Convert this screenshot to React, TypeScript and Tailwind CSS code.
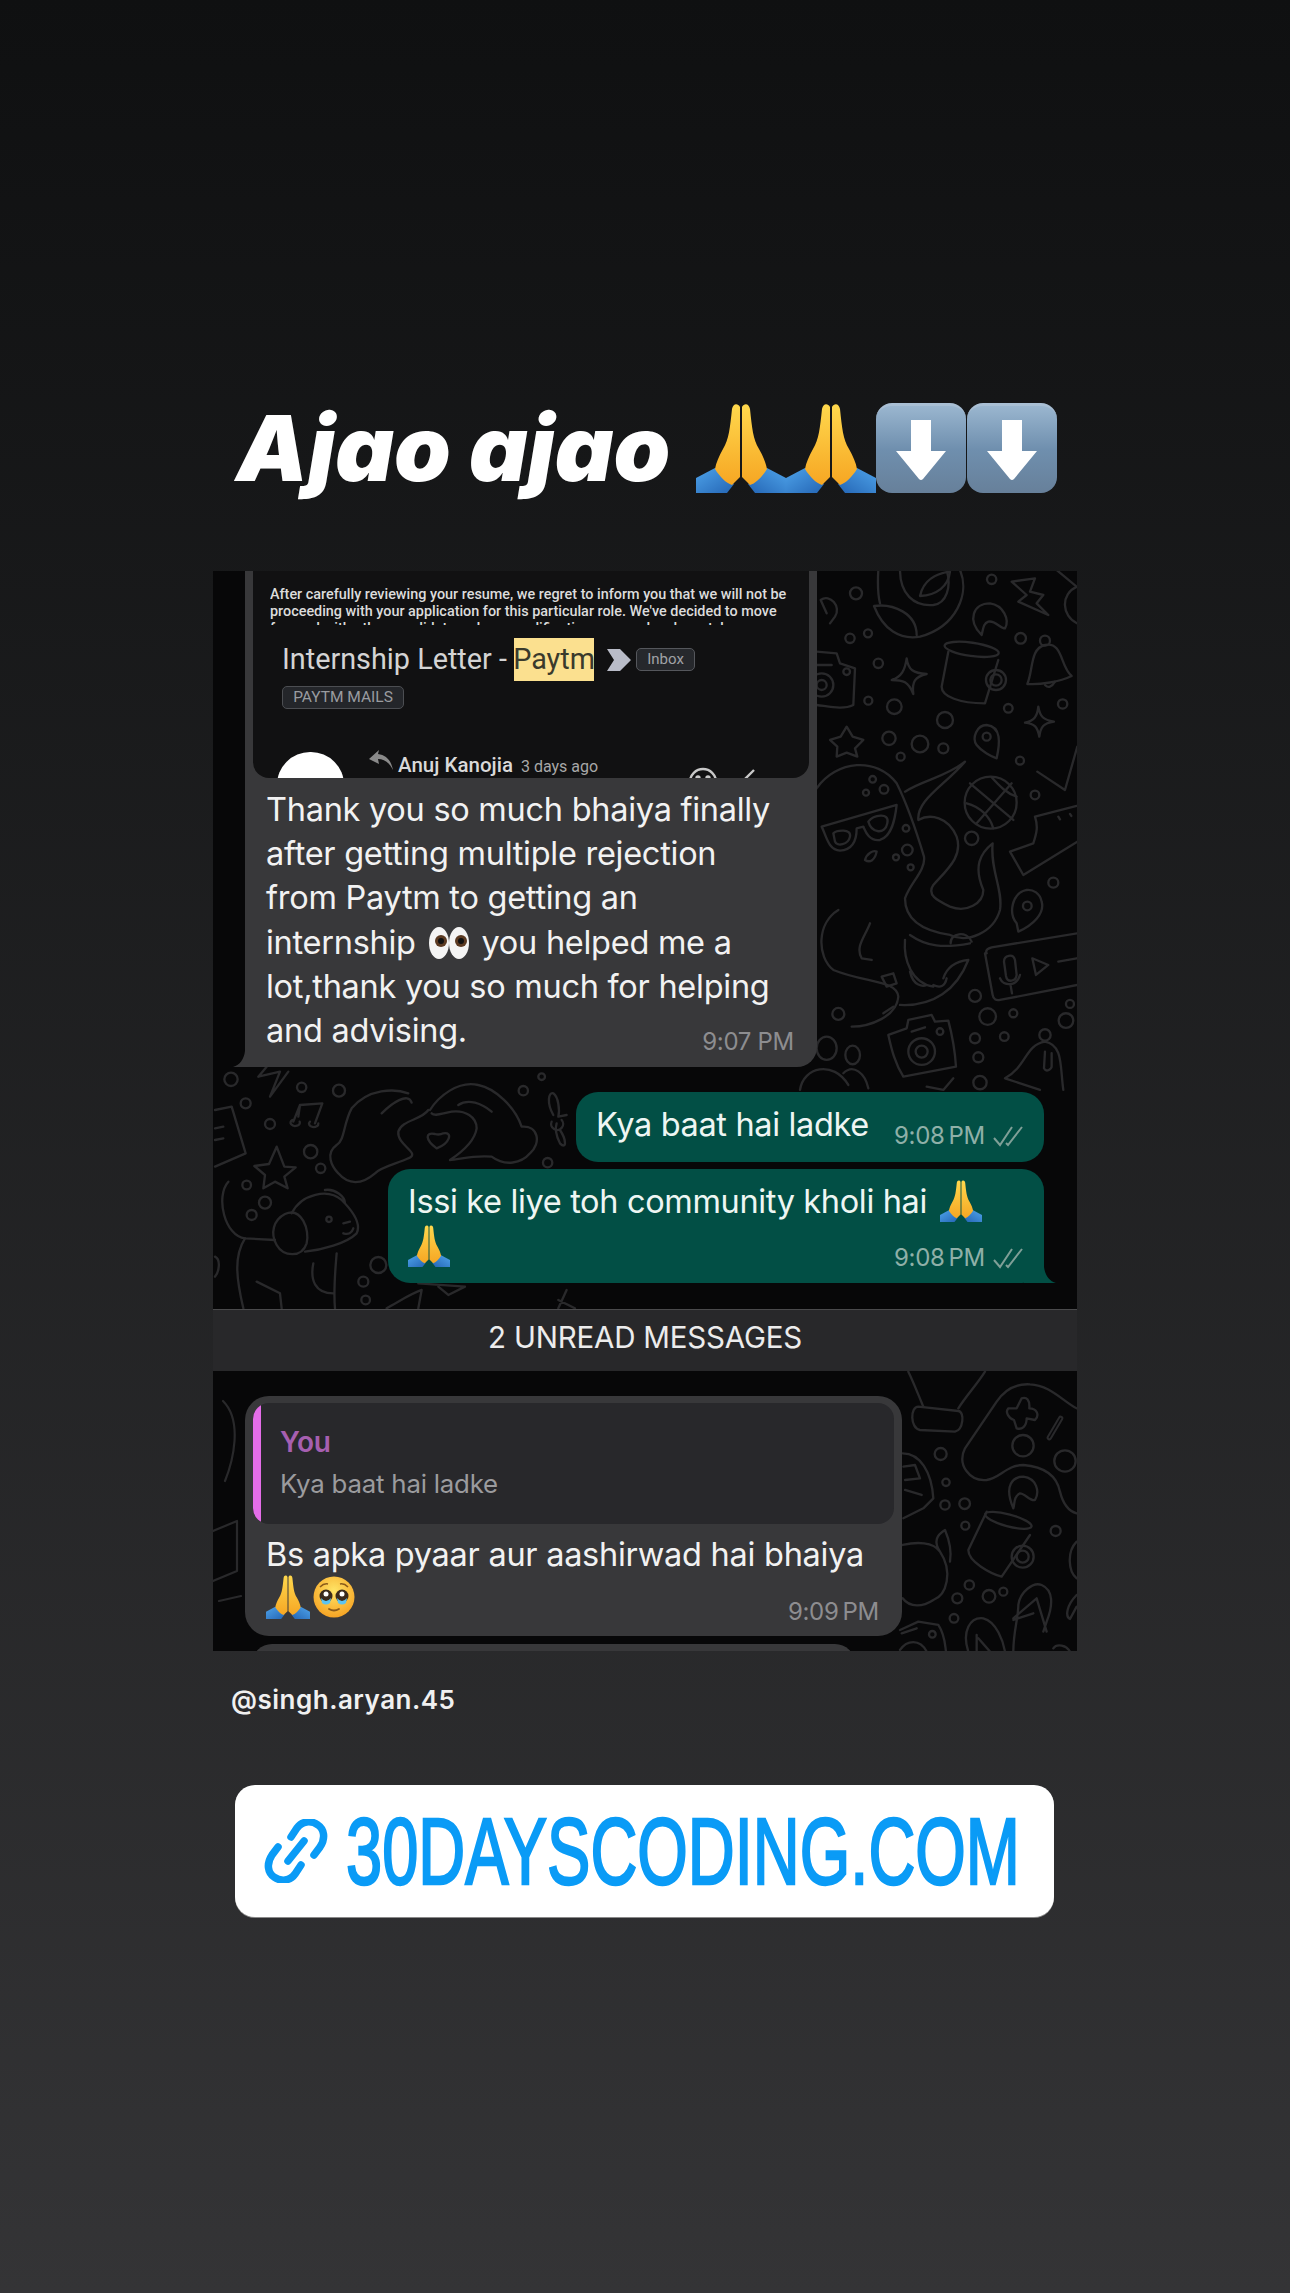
const sans = "font-['Inter','Liberation_Sans',sans-serif]";
const roboto = "font-['Roboto','Liberation_Sans',sans-serif]";

// Emoji are drawn because no colour emoji font is available
function PrayEmoji({ size = 90 }: { size?: number }) {
    return (
        <svg width={size} height={size} viewBox="0 0 90 90" className="shrink-0">
            <defs>
                <linearGradient id="hand" x1="0" y1="0" x2="0" y2="1">
                    <stop offset="0" stopColor="#ffd84d" />
                    <stop offset="1" stopColor="#f6a623" />
                </linearGradient>
                <linearGradient id="sleeve" x1="0" y1="0" x2="1" y2="1">
                    <stop offset="0" stopColor="#4ea3ea" />
                    <stop offset="1" stopColor="#2465b4" />
                </linearGradient>
            </defs>
            <g>
                <path d="M0 75 L19 65 L38 81 L31 90 L0 90Z" fill="url(#sleeve)" />
                <path d="M44 4 C42 0 37 0 36 6 C34 25 33 36 27 46 C23 53 20 60 19 66 C24 74 30 80 36 82 L44 74Z" fill="url(#hand)" />
            </g>
            <g transform="translate(90 0) scale(-1 1)">
                <path d="M0 75 L19 65 L38 81 L31 90 L0 90Z" fill="url(#sleeve)" />
                <path d="M44 4 C42 0 37 0 36 6 C34 25 33 36 27 46 C23 53 20 60 19 66 C24 74 30 80 36 82 L44 74Z" fill="url(#hand)" />
            </g>
        </svg>
    );
}

function ArrowEmoji() {
    return (
        <div className="flex h-[90px] w-[90px] shrink-0 items-center justify-center rounded-[16px] border-t-[3px] border-[#a9bfd4] bg-gradient-to-b from-[#9ab6cf] via-[#6f8fae] to-[#67809a]">
            <svg width="50" height="60" viewBox="0 0 50 60">
                <path d="M15 0 H35 V31 H50 L27 59 Q25 61 23 59 L0 31 H15Z" fill="#fff" />
            </svg>
        </div>
    );
}

function EyesEmoji() {
    return (
        <svg width="42" height="34" viewBox="0 0 42 34" className="mx-[3px] inline-block align-[-6px]">
            <ellipse cx="11" cy="17" rx="10" ry="16" fill="#f4f4f4" />
            <ellipse cx="31" cy="17" rx="10" ry="16" fill="#f4f4f4" />
            <circle cx="13" cy="15" r="6" fill="#5b3a22" />
            <circle cx="33" cy="15" r="6" fill="#5b3a22" />
            <circle cx="13" cy="15" r="3" fill="#111" />
            <circle cx="33" cy="15" r="3" fill="#111" />
        </svg>
    );
}

function PleadingEmoji() {
    return (
        <svg width="42" height="42" viewBox="0 0 42 42" className="shrink-0">
            <defs>
                <radialGradient id="face" cx="0.5" cy="0.35" r="0.7">
                    <stop offset="0" stopColor="#ffe566" />
                    <stop offset="1" stopColor="#f59e1f" />
                </radialGradient>
            </defs>
            <circle cx="21" cy="21" r="20.5" fill="url(#face)" />
            <circle cx="13" cy="20" r="6.5" fill="#3a2a1c" />
            <circle cx="29" cy="20" r="6.5" fill="#3a2a1c" />
            <circle cx="13" cy="18" r="2.5" fill="#fff" />
            <circle cx="29" cy="18" r="2.5" fill="#fff" />
            <path d="M8 22 Q13 28 18 22 L17 27 Q13 30 9 27Z" fill="#5cc4f2" />
            <path d="M24 22 Q29 28 34 22 L33 27 Q29 30 25 27Z" fill="#5cc4f2" />
            <path d="M7 11 Q11 7 15 8 M35 11 Q31 7 27 8" stroke="#8a5a1a" strokeWidth="1.6" fill="none" />
            <path d="M16 33 Q21 36 26 33" stroke="#8a5a1a" strokeWidth="1.8" fill="none" strokeLinecap="round" />
        </svg>
    );
}

function Ticks() {
    return (
        <svg width="32" height="24" viewBox="0 0 32 24" fill="none" stroke="#7f9f97" strokeWidth="2">
            <path d="M2 14 L8 21 L20 3" />
            <path d="M14 19 L16 21 L30 3" />
        </svg>
    );
}

function LinkGlyph() {
    return (
        <svg width="64" height="64" viewBox="0 0 64 64" fill="none" stroke="#0a9bf6" strokeWidth="7.5" strokeLinecap="round" className="ml-[29px] shrink-0">
            <path d="M50 36 L56 28 C62 19 60 10 54 6 C47 1 38 2 33 9 L27 18" />
            <path d="M14 28 L8 36 C2 45 4 54 10 58 C17 63 26 62 31 55 L37 46" />
            <path d="M24 42 L40 22" />
        </svg>
    );
}

function Circles({ items }: { items: number[][] }) {
    return (
        <>
            {items.map(([cx, cy, r]) => (
                <circle key={`${cx}-${cy}`} cx={cx} cy={cy} r={r} />
            ))}
        </>
    );
}

// Wallpaper of the upper chat, drawn in the 3x coordinates of the right column
function UpperDoodles() {
    return (
        <svg className="absolute inset-0" width="864" height="738" viewBox="0 0 864 738" fill="none" stroke="#29292b" strokeWidth="2.2" strokeLinecap="round" strokeLinejoin="round">
            <g transform="translate(587 -1) scale(0.3333)" strokeWidth="7">
                <Circles items={[[168,70,18],[150,205,14],[204,190,12],[235,280,14],[205,392,12],[283,410,22],[435,450,24],[575,28,14],[662,205,16],[625,415,13],[788,402,14],[267,505,20],[360,522,25],[430,535,15],[302,560,12],[660,572,12],[705,675,13],[515,805,20],[760,938,15],[525,1278,18],[563,1340,25],[640,1330,12],[810,1302,12],[798,1352,22],[525,1405,15],[613,1400,13],[535,1462,15],[540,1538,20],[115,1332,18],[218,628,10],[252,658,13],[198,668,9],[318,775,10],[322,840,16],[288,862,9],[332,892,9]]} />
                <path d="M62 90 C90 70 125 110 105 140 L90 160 M62 90 L80 130" />
                <path d="M235 0 C232 50 235 80 240 100" />
                <path d="M300 0 C300 70 340 110 400 105 C440 100 455 50 440 0" />
                <path d="M360 78 C370 30 410 10 450 5 C445 50 410 75 360 78Z" />
                <path d="M480 0 C510 70 470 170 360 200 C300 210 250 180 222 108 C280 100 350 130 350 195" />
                <path d="M635 35 L705 25 L690 65 L730 75 L710 100 L745 135 L655 95 L680 75Z" />
                <path d="M832 50 C780 70 785 140 832 160 M770 0 L830 50" />
                <path d="M545 195 C500 150 520 100 570 100 C610 105 630 150 615 175 C600 175 585 150 565 155 C550 160 550 175 545 195Z" />
                <ellipse cx="515" cy="238" rx="82" ry="20" transform="rotate(8 515 238)" />
                <path d="M445 245 L425 350 C425 380 480 400 555 400 L595 270" />
                <circle cx="588" cy="330" r="30" />
                <circle cx="588" cy="330" r="17" />
                <path d="M735 225 C690 235 700 300 682 342 C720 345 780 335 815 318 C780 290 790 215 735 225Z" />
                <circle cx="735" cy="212" r="15" />
                <path d="M735 345 Q750 360 765 335" />
                <path d="M50 245 L110 250 L120 280 L165 295 L160 405 C130 420 90 410 50 405 M50 285 H95" />
                <circle cx="65" cy="345" r="35" />
                <circle cx="65" cy="345" r="15" />
                <circle cx="140" cy="305" r="10" />
                <path d="M320 265 C325 300 340 310 380 312 C345 320 335 335 340 372 C325 335 310 330 275 330 C305 320 315 300 320 265Z" />
                <path d="M715 410 C720 440 730 450 762 455 C730 460 722 470 718 500 C712 470 705 462 675 458 C702 452 712 440 715 410Z" />
                <path d="M140 470 L158 500 L190 510 L165 535 L172 560 L140 548 L110 560 L112 530 L90 510 L122 500Z" />
                <path d="M560 465 C530 465 515 505 530 525 C545 545 575 560 590 565 C600 520 605 470 560 465Z" />
                <circle cx="560" cy="500" r="12" />
                <path d="M712 605 L795 660 L832 530" />
                <circle cx="572" cy="698" r="78" />
                <path d="M510 640 L640 750 M635 640 L530 760 M500 700 C540 710 570 740 580 775 M575 622 C600 650 620 670 650 680" />
                <path d="M50 655 C110 570 230 560 290 640 C320 700 345 770 372 860 C378 900 330 940 315 985 C315 1040 350 1080 450 1095 C500 1120 580 1090 600 1020 C610 960 570 900 578 820 C540 850 520 890 550 960 C550 1000 500 1030 450 1010 C410 990 380 975 400 945 C440 900 490 860 470 800 C445 740 390 730 355 750 C350 690 430 650 495 575 C440 620 370 630 315 665" />
                <path d="M65 770 L290 705 C285 750 275 800 240 810 C205 815 195 780 190 770 L170 775 C170 810 160 840 120 842 C85 840 80 800 65 770Z" />
                <path d="M100 790 C110 780 155 775 150 800 C145 825 110 830 105 815Z M205 755 C220 735 270 725 262 760 C255 795 215 790 205 755Z" />
                <path d="M195 870 C200 850 220 840 230 845 C225 870 210 880 195 870Z" />
                <path d="M115 1020 C50 1060 50 1160 100 1200 C200 1240 290 1230 295 1280 C290 1340 210 1370 155 1370 M210 1060 C195 1100 165 1130 185 1165 L215 1170" />
                <path d="M315 1110 C310 1170 335 1240 400 1250 M330 1205 C340 1250 370 1250 380 1245 M400 1245 C420 1255 435 1250 440 1225 M300 1305 C400 1310 470 1260 505 1170 C460 1175 440 1195 430 1225" />
                <path d="M245 1220 L280 1210 L290 1240 L260 1250Z M250 1330 L280 1310" />
                <path d="M330 1095 C380 1130 430 1135 510 1120 M452 1120 C450 1090 500 1080 515 1115" />
                <path d="M560 1150 C555 1140 565 1135 575 1132 L832 1090 M555 1150 L578 1275 C580 1290 590 1292 600 1290 L832 1245" />
                <path d="M612 1175 C612 1155 640 1150 645 1170 L650 1215 C648 1235 622 1240 618 1218Z M600 1225 C610 1250 650 1250 660 1215 M632 1247 L636 1270" />
                <path d="M697 1165 L745 1185 L708 1215Z M775 1175 L830 1165" />
                <path d="M680 960 C635 970 625 1030 650 1060 L655 1085 C700 1065 735 1030 725 995 C720 970 700 958 680 960Z" />
                <circle cx="682" cy="1008" r="13" />
                <path d="M630 845 L670 915 L832 815 M705 740 L830 708 M705 740 C715 770 710 790 700 820 L630 845 M775 740 L780 748 M810 732 L814 738" />
                <path d="M265 1395 L320 1375 L325 1350 L395 1335 L405 1355 L445 1352 C455 1390 465 1440 468 1490 L310 1520 C285 1480 275 1440 265 1395Z" />
                <circle cx="365" cy="1445" r="40" />
                <circle cx="365" cy="1445" r="18" />
                <path d="M335 1385 L375 1372" />
                <circle cx="420" cy="1385" r="10" />
                <circle cx="735" cy="1395" r="17" />
                <path d="M735 1415 C675 1425 680 1490 615 1525 L720 1560 M735 1415 C790 1425 780 1490 790 1560" />
                <path d="M735 1445 L732 1495 C740 1510 755 1495 755 1490 L755 1450" />
                <ellipse cx="80" cy="1435" rx="30" ry="35" />
                <ellipse cx="158" cy="1455" rx="22" ry="28" />
                <path d="M0 1560 C10 1490 100 1470 145 1545 M130 1510 C160 1480 195 1510 205 1555" />
                <path d="M380 1550 L430 1560 L460 1525" />
            </g>
            {/* lower left block */}
            <g transform="translate(-8 489) scale(0.3333)" strokeWidth="7">
                <Circles items={[[78,58,20],[290,82,14],[122,130,15],[402,92,18],[195,192,15],[317,275,20],[347,325,14],[125,375,13],[180,428,18],[140,465,15],[520,615,24],[475,665,15],[482,720,13],[955,92,14],[1010,50,10],[1028,308,14]]} />
                <path d="M160 50 L185 20 M160 50 L225 35 L195 110 L250 35" />
                <path d="M30 150 L80 140 L122 280 L30 320 M30 205 L55 200 M30 240 L55 235" />
                <path d="M265 185 L285 135 L352 130 L330 190 M285 135 L280 170 M262 180 A14 10 0 1 0 284 185 M315 185 A14 10 0 1 0 340 190" />
                <path d="M215 260 L238 320 L272 322 L238 350 L248 385 L210 365 L175 385 L180 345 L148 318 L192 312Z" />
                <path d="M530 160 C560 130 610 95 620 128 M610 100 C570 85 490 85 440 145 C415 190 420 240 395 255 C360 280 380 320 400 340 C430 375 470 375 510 340 C530 320 580 310 610 295 C650 280 575 255 580 215 C590 180 650 180 670 150" />
                <path d="M675 150 C700 110 760 60 820 75 C870 85 930 140 950 200 C1000 195 1010 250 975 280 C950 310 900 320 860 290 C800 285 760 300 735 300 C780 270 810 240 815 205 C815 170 780 150 740 155 C710 160 690 170 680 160 M760 135 C790 115 830 130 860 155" />
                <path d="M695 265 C660 240 660 215 690 222 C700 225 705 225 715 220 C745 215 735 250 695 265Z" />
                <path d="M1045 165 C1025 130 1030 95 1045 100 C1060 110 1065 150 1060 170 L1085 165 M1065 210 C1085 240 1085 270 1065 250 C1055 230 1050 205 1055 190 M1040 185 A18 18 0 1 0 1070 180" />
                <path d="M70 365 C30 410 60 530 120 535 L210 540 M260 460 C290 400 370 385 410 420 C440 450 470 490 455 520 C425 550 350 570 300 575 M360 390 C390 385 420 410 420 430" />
                <path d="M240 462 C205 480 195 520 215 555 C235 590 290 595 305 550 C315 510 290 440 240 462Z" />
                <circle cx="372" cy="478" r="8" />
                <path d="M415 490 L435 485 M415 520 C430 525 440 520 445 505" />
                <path d="M120 535 C85 590 95 660 115 745 M395 580 C390 640 385 690 390 745 M155 665 L225 700 L230 745 M325 610 C315 660 330 700 385 700" />
                <path d="M545 745 C590 720 620 700 650 690 L640 745 M1060 720 L1110 745 M1085 690 L1060 745" />
                <path d="M640 670 L780 680 L730 705 L700 680" />
                <path d="M30 590 C50 600 40 640 30 650" />
            </g>
        </svg>
    );
}

function LowerDoodles() {
    return (
        <svg className="absolute inset-0" width="864" height="280" viewBox="0 0 864 280" fill="none" stroke="#29292b" strokeLinecap="round" strokeLinejoin="round">
            <g transform="translate(677 -6) scale(0.3333)" strokeWidth="7">
                <Circles items={[[152,267,18],[168,352,11],[165,420,14],[224,416,16],[226,482,12],[497,498,15],[525,288,32],[399,242,32],[238,660,14],[202,700,15],[297,694,19],[340,680,12],[192,760,13],[127,808,10]]} />
                <path d="M55 20 C70 50 85 90 100 125 M285 20 C260 60 230 90 205 130" />
                <path d="M85 125 L205 138 C225 140 220 195 195 200 L90 195 C60 190 60 125 85 125Z" />
                <path d="M560 130 C520 110 480 60 420 58 C370 55 340 80 320 110 L225 250 C200 300 240 350 290 345 C330 340 350 300 400 300 C460 305 500 330 510 380 C520 420 540 440 560 445" />
                <path d="M395 100 C410 95 420 105 418 130 C440 130 450 150 435 165 L410 160 C410 185 395 195 380 190 L372 165 C355 160 345 140 355 130 L380 130 Z" />
                <path d="M512 160 L478 218" strokeWidth="16" />
                <path d="M512 160 L478 218" strokeWidth="4" stroke="#08080a" />
                <path d="M370 430 C340 360 370 335 400 335 C440 340 450 380 435 405 C420 410 405 385 390 385 C370 395 375 415 370 430Z" />
                <ellipse cx="355" cy="466" rx="72" ry="18" transform="rotate(15 355 466)" />
                <path d="M290 440 L235 555 C235 590 300 625 335 635 L420 510" />
                <circle cx="398" cy="575" r="33" />
                <circle cx="398" cy="575" r="18" />
                <path d="M38 540 C80 530 130 530 150 560 C190 620 170 690 130 705 C100 725 60 730 38 700 M150 560 C130 530 140 510 165 495 C180 530 185 560 180 590" />
                <path d="M38 265 C90 265 125 320 130 400 L100 430 L40 460 M40 305 L75 300 L90 340 L45 345 M45 375 L95 390" />
                <path d="M30 795 L85 770 L145 780 C165 810 165 840 168 860 M35 805 L80 790 M30 855 C50 825 90 820 110 860" />
                <path d="M235 860 C215 800 240 755 280 760 C320 770 340 830 345 860 M260 860 L260 810 M265 820 L300 860" />
                <path d="M370 860 C370 800 385 760 385 720 C390 680 430 650 455 660 C490 675 490 720 470 770 L460 800 M370 760 L440 700 L470 800 M370 765 L430 745" />
                <path d="M490 850 C500 835 530 840 540 860 M560 690 C530 720 525 755 540 762 L560 725 M560 530 C530 560 535 620 560 640" />
            </g>
            <g strokeWidth="2.2">
                <path d="M10 30 C30 50 20 90 12 110 M0 160 L24 150 L24 200 L0 210 M6 230 L28 225" />
            </g>
        </svg>
    );
}

function Time({ label }: { label: string }) {
    return <span className={`${sans} text-[24px] leading-[28px] tracking-[-0.3px] text-[#8d8d90] whitespace-nowrap`}>{label}</span>;
}

function SentTime({ label }: { label: string }) {
    return (
        <div className="flex items-center gap-[7px]">
            <span className={`${sans} text-[24px] leading-[28px] tracking-[-0.3px] text-[#8fb0a8] whitespace-nowrap`}>{label}</span>
            <Ticks />
        </div>
    );
}

function MailPreview() {
    return (
        <div className="mx-[8px] h-[207px] overflow-hidden rounded-b-[16px] bg-[#111112] pl-[17px] pr-[20px]">
            {/* third line of the mail body is cut, only its ascenders show */}
            <div className="mt-[15px] h-[39px] overflow-hidden">
                <p className={`${roboto} text-[14.4px] leading-[17px] font-medium text-[#dcdcdc] whitespace-nowrap`}>
                    After carefully reviewing your resume, we regret to inform you that we will not be<br />
                    proceeding with your application for this particular role. We've decided to move<br />
                    forward with other candidates whose qualifications more closely match
                </p>
            </div>
            <div className={`${roboto} mt-[13px] flex h-[43px] items-center pl-[12px] text-[28.8px] text-[#d4d4d4]`}>
                <span className="whitespace-pre">Internship Letter - </span>
                <span className="flex h-[43px] w-[80px] items-center justify-center bg-[#fbe08f] text-[#3a3a2c]">Paytm</span>
                <svg width="24" height="22" viewBox="0 0 24 22" className="ml-[13px]">
                    <path d="M0 0 H13 L24 11 L13 22 H0 L7 11Z" fill="#b9bcc8" />
                </svg>
                <span className="ml-[5px] flex h-[23px] w-[59px] items-center justify-center rounded-[5px] border border-[#55575c] bg-[#26282c] text-[15px] text-[#a0a2a6]">Inbox</span>
            </div>
            <div className={`${roboto} ml-[12px] mt-[5px] flex h-[23px] w-[122px] items-center justify-center rounded-[5px] border border-[#4c4e52] bg-[#24262a] text-[15.5px] text-[#9a9ca0]`}>PAYTM MAILS</div>
            <div className="mt-[43px] flex items-start">
                <div className="ml-[7px] h-[66px] w-[67px] shrink-0 rounded-full bg-white" />
                <svg width="24" height="20" viewBox="0 0 24 20" className="ml-[25px] mt-[-2px] shrink-0">
                    <path d="M10 0 L0 9 L10 14 L9 9 C15 9 20 12 24 20 C22 10 17 5 9 4Z" fill="#8a8a8a" />
                </svg>
                <span className={`${roboto} ml-[5px] text-[20.5px] leading-[26px] font-medium text-[#d9d9d9] whitespace-nowrap`}>Anuj Kanojia</span>
                <span className={`${roboto} ml-[8px] mt-[3px] text-[16px] leading-[24px] text-[#a8a8a8] whitespace-nowrap`}>3 days ago</span>
                <svg width="30" height="30" viewBox="0 0 30 30" fill="none" stroke="#c8c8c8" strokeWidth="2.4" className="ml-[90px] mt-[15px] shrink-0">
                    <circle cx="15" cy="15" r="13" />
                    <circle cx="10" cy="11" r="1.5" fill="#c8c8c8" />
                    <circle cx="20" cy="11" r="1.5" fill="#c8c8c8" />
                </svg>
                <svg width="24" height="24" viewBox="0 0 24 24" fill="none" stroke="#c8c8c8" strokeWidth="2.4" className="ml-[24px] mt-[16px] shrink-0">
                    <path d="M2 12 L12 2 M2 12 H22" />
                </svg>
            </div>
        </div>
    );
}

export default function App() {
    return (
        <div className="flex h-[2293px] w-[1290px] flex-col overflow-hidden bg-gradient-to-b from-[#0f1011] to-[#343436] pt-[403px]">
            {/* Story headline */}
            <div className="flex h-[90px] items-center pl-[236px]">
                <h1 className="font-['Inter','Liberation_Sans',sans-serif] text-[91px] leading-[90px] font-black italic text-white whitespace-nowrap">Ajao ajao</h1>
                <div className="ml-auto mr-[233px] flex items-center">
                    <PrayEmoji />
                    <PrayEmoji />
                    <ArrowEmoji />
                    <div className="ml-[1px]"><ArrowEmoji /></div>
                </div>
            </div>

            {/* Chat screenshot */}
            <div className="mx-[213px] mt-[78px] w-[864px]">
                <div className="relative h-[738px] overflow-hidden bg-[#070708]">
                    <UpperDoodles />
                    <div className="relative flex flex-col">
                        <div className="relative ml-[32px] w-[572px] rounded-b-[20px] bg-[#38383a]">
                            <MailPreview />
                            <div className="relative px-[21px] pt-[10px] pb-[14px]">
                                <p className={`${sans} text-[32.5px] leading-[44.2px] tracking-[-0.27px] text-[#f2f2f2]`}>
                                    Thank you so much bhaiya finally<br />
                                    after getting multiple rejection<br />
                                    from Paytm to getting an<br />
                                    internship <EyesEmoji /> you helped me a<br />
                                    lot,thank you so much for helping<br />
                                    and advising.
                                </p>
                                <div className="absolute bottom-[11px] right-[23px]"><Time label="9:07 PM" /></div>
                            </div>
                            <svg width="32" height="26" viewBox="0 0 32 26" className="absolute bottom-0 left-[-12px]">
                                <path d="M0 26 C7 24 11 18 12 10 L12 0 L32 0 L32 26Z" fill="#38383a" />
                            </svg>
                        </div>

                        <div className="ml-[363px] mt-[25px] flex h-[70px] w-[468px] justify-between rounded-[22px] bg-[#024f45] pl-[20px] pr-[20px]">
                            <span className={`${sans} mt-[15px] text-[32.5px] leading-[36px] tracking-[-0.35px] text-[#eef6f3]`}>Kya baat hai ladke</span>
                            <div className="mt-[30px]"><SentTime label={'9:08\u202fPM'} /></div>
                        </div>

                        <div className="relative ml-[175px] mt-[7px] h-[114px] w-[656px] rounded-[22px] bg-[#024f45] pl-[20px] pr-[20px]">
                            <div className="flex h-[53px] items-end gap-[13px]">
                                <span className={`${sans} text-[32.5px] leading-[40px] tracking-[-0.35px] text-[#eef6f3] whitespace-nowrap`}>Issi ke liye toh community kholi hai</span>
                                <PrayEmoji size={42} />
                            </div>
                            <div className="mt-[3px]"><PrayEmoji size={42} /></div>
                            <div className="absolute bottom-[11px] right-[20px]"><SentTime label={'9:08\u202fPM'} /></div>
                            <svg width="32" height="26" viewBox="0 0 32 26" className="absolute bottom-0 right-[-12px]">
                                <path d="M32 26 C25 24 21 18 20 10 L20 0 L0 0 L0 26Z" fill="#024f45" />
                            </svg>
                        </div>
                    </div>
                </div>

                {/* Unread divider */}
                <div className={`${sans} flex h-[62px] items-center justify-center border-t border-[#4a4a4c] bg-[#28282a] pb-[6px] text-[29.5px] tracking-[-0.2px] text-[#ececec]`}>
                    2 UNREAD MESSAGES
                </div>

                <div className="relative h-[280px] overflow-hidden bg-[#070708]">
                    <LowerDoodles />
                    <div className="relative flex flex-col">
                        <div className="relative ml-[32px] mt-[25px] h-[240px] w-[657px] rounded-[24px] bg-[#38383a] p-[7px_8px]">
                            <div className="flex h-[121px] overflow-hidden rounded-[16px] bg-[#28282b]">
                                <div className="h-full w-[8px] shrink-0 bg-[#e46de8]" />
                                <div className={`${sans} pl-[19px]`}>
                                    <div className="mt-[21px] text-[28px] leading-[36px] font-semibold tracking-[-0.3px] text-[#a65fb0]">You</div>
                                    <div className="mt-[6px] text-[25.8px] leading-[36px] tracking-[-0.2px] text-[#9b9b9e]">Kya baat hai ladke</div>
                                </div>
                            </div>
                            <div className={`${sans} mt-[9px] pl-[13px] text-[32.5px] leading-[44px] tracking-[-0.27px] text-[#f2f2f2] whitespace-nowrap`}>Bs apka pyaar aur aashirwad hai bhaiya</div>
                            <div className="mt-[-2px] flex items-center gap-[3px] pl-[13px]">
                                <PrayEmoji size={44} />
                                <PleadingEmoji />
                            </div>
                            <div className="absolute bottom-[10px] right-[23px]"><Time label={'9:09\u202fPM'} /></div>
                        </div>
                        <div className="ml-[39px] mt-[8px] h-[20px] w-[603px] rounded-t-[20px] bg-[#38383a]" />
                    </div>
                </div>
            </div>

            {/* Handle */}
            <div className={`${sans} ml-[231px] mt-[32px] text-[26px] leading-[34px] font-semibold tracking-[0.5px] text-[#f0f0f0]`}>@singh.aryan.45</div>

            {/* Link sticker */}
            <div className="ml-[235px] mt-[68px] flex h-[132px] w-[819px] items-center rounded-[20px] bg-white shadow-[0_1px_0_#8a8a8a]">
                <LinkGlyph />
                <span className="ml-[18px] inline-block origin-left scale-x-[0.684] font-['Liberation_Sans',sans-serif] text-[95px] leading-[97px] text-[#0a9bf6] [-webkit-text-stroke:2.5px_#0a9bf6] whitespace-nowrap">30DAYSCODING.COM</span>
            </div>
        </div>
    );
}
